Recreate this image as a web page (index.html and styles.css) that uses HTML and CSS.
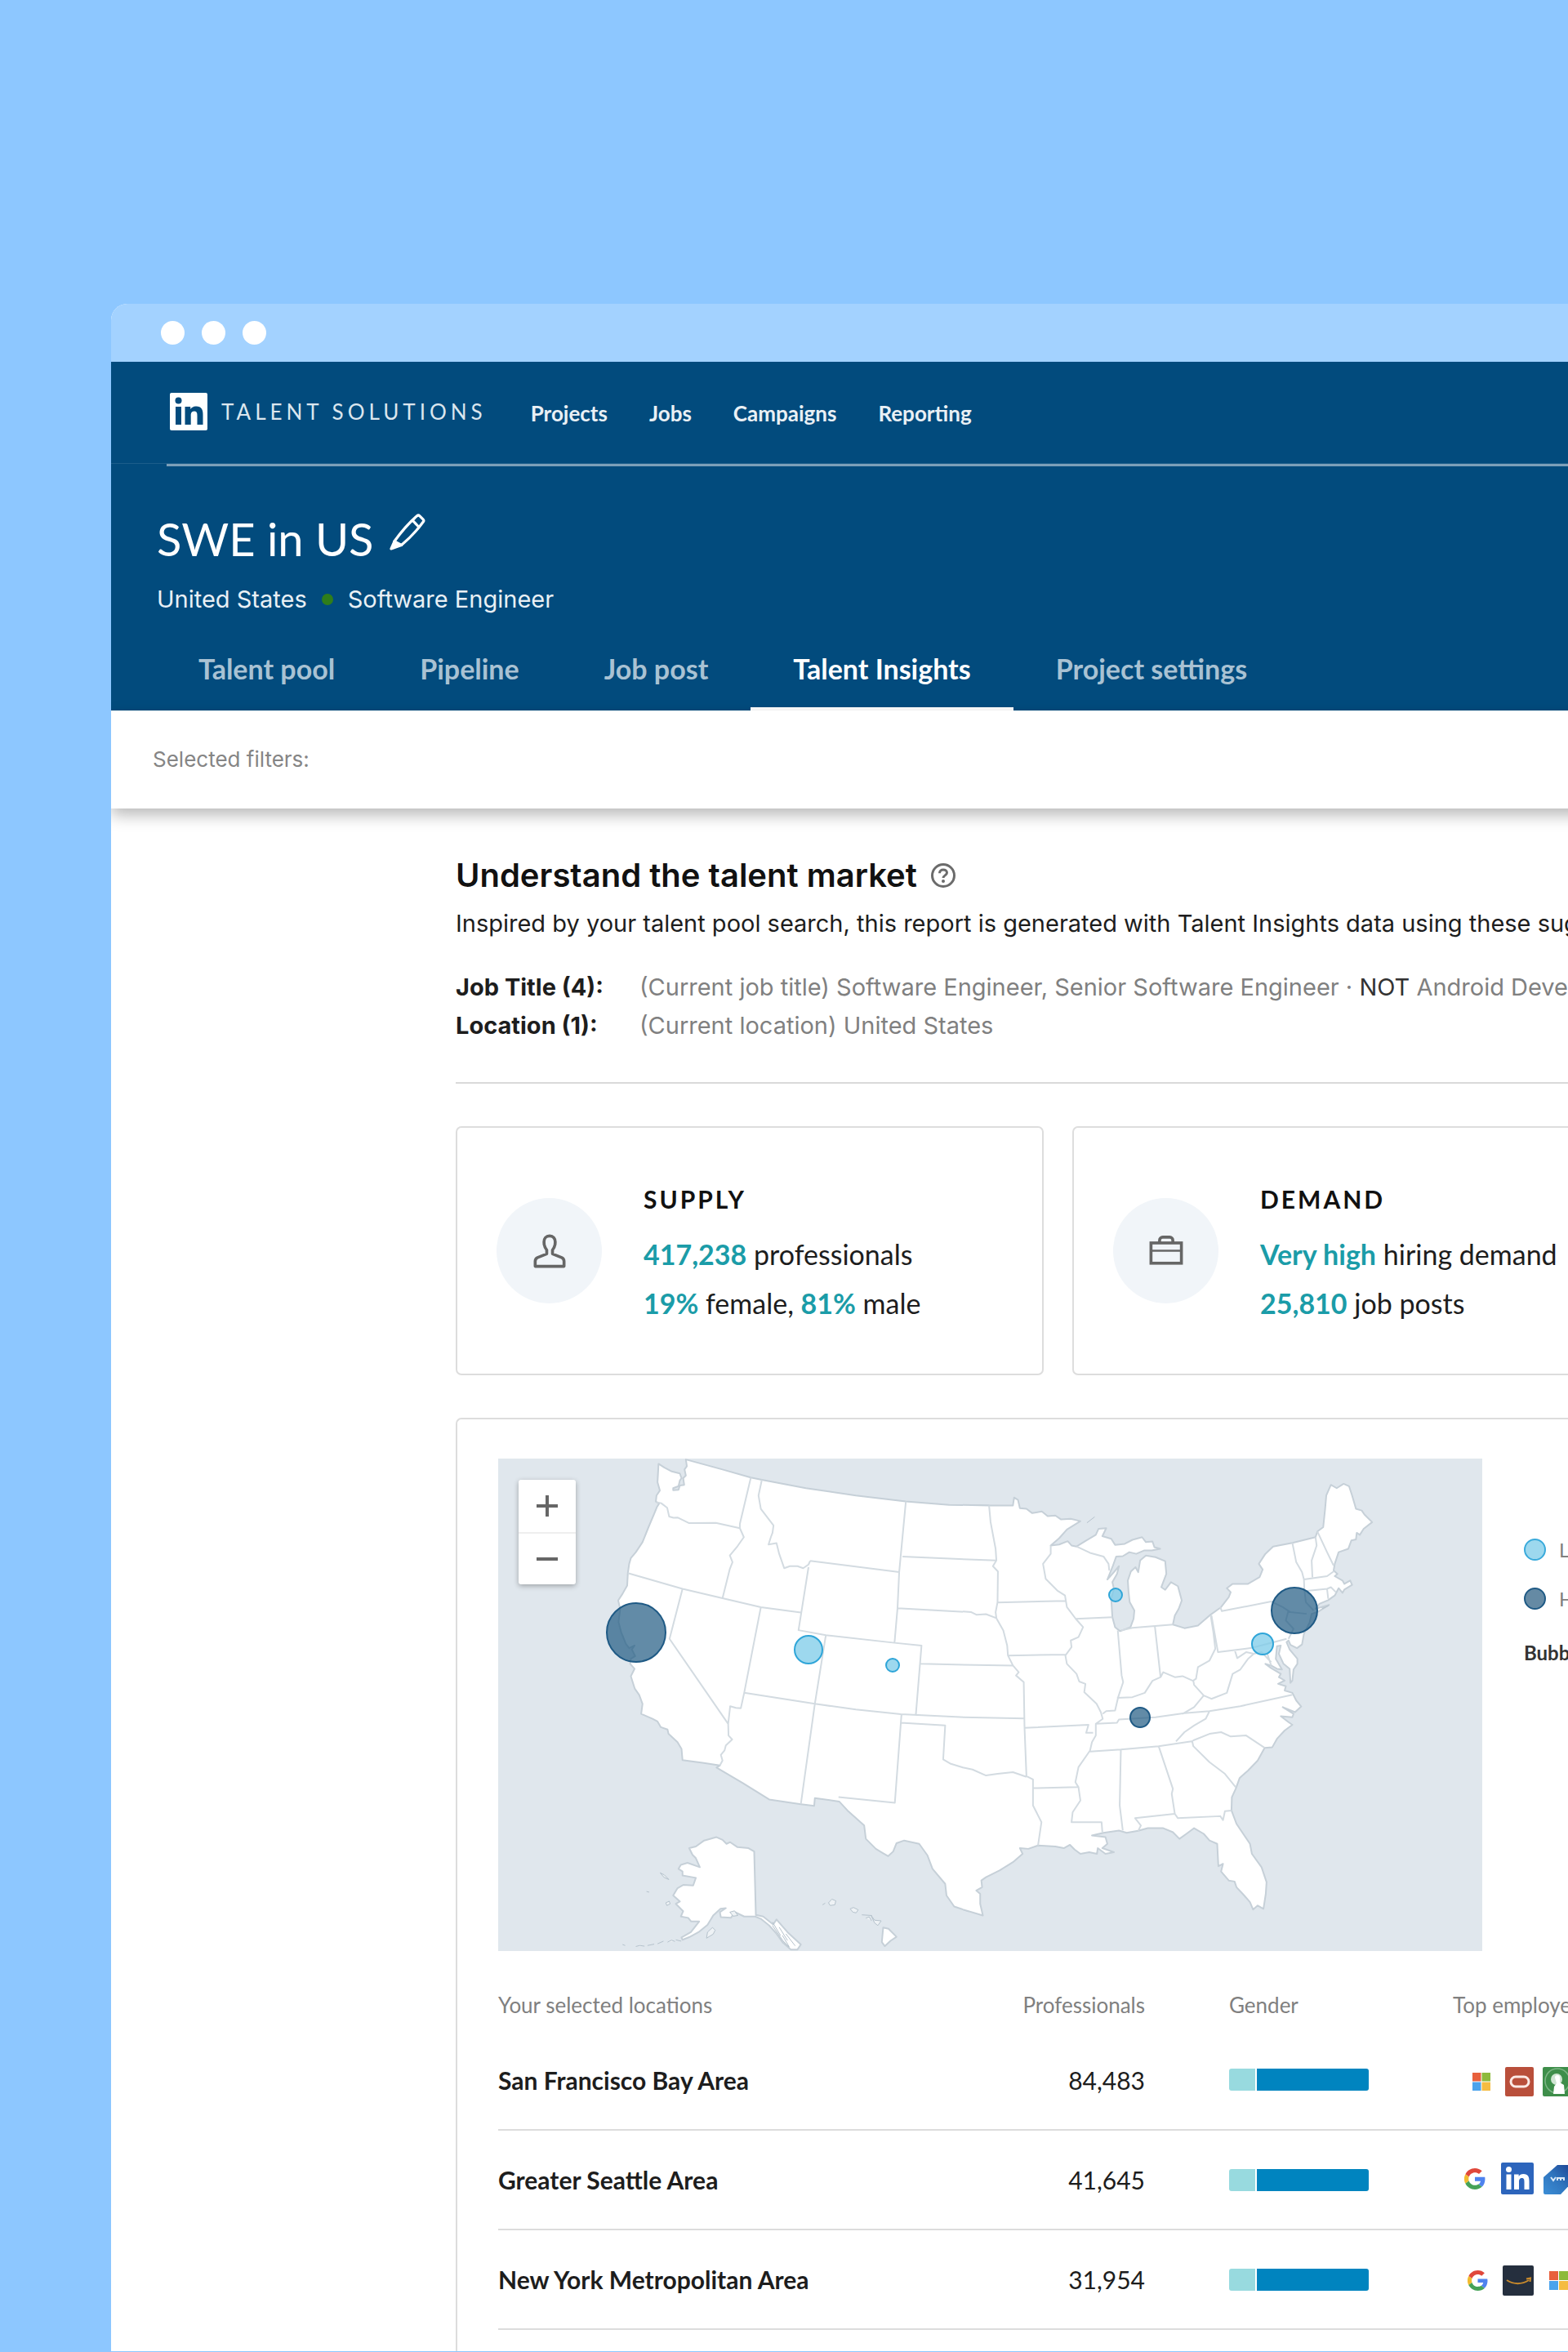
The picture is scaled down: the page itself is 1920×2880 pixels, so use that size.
FILE: index.html
```html
<!DOCTYPE html>
<html lang="en">
<head>
<meta charset="utf-8">
<meta name="viewport" content="width=device-width, initial-scale=1">
<title>SWE in US – Talent Insights</title>
<link rel="stylesheet" href="styles.css">
</head>
<body>
<svg class="sprite" aria-hidden="true">
  <symbol id="google" viewBox="0 0 48 48">
    <path fill="#e0483b" d="M24 9.5c3.5 0 6.700 1.200 9.200 3.600l6.900-6.900C35.900 2.400 30.500 0 24 0 14.600 0 6.500 5.400 2.600 13.200l8 6.200C12.400 13.700 17.700 9.500 24 9.500z"/>
    <path fill="#4f83ee" d="M47 24.500c0-1.600-.2-3.100-.4-4.500H24v9h12.900c-.6 3-2.200 5.500-4.700 7.200l7.700 6C44.400 38 47 31.800 47 24.500z"/>
    <path fill="#f3bb2f" d="M10.500 28.600a14.500 14.500 0 0 1 0-9.200l-8-6.200a24 24 0 0 0 0 21.600l8-6.200z"/>
    <path fill="#45a257" d="M24 48c6.500 0 11.900-2.100 15.900-5.800l-7.700-6c-2.200 1.500-4.900 2.300-8.200 2.300-6.300 0-11.600-4.200-13.500-9.900l-8 6.200C6.500 42.600 14.600 48 24 48z"/>
  </symbol>
  <symbol id="microsoft" viewBox="0 0 22 22">
    <path fill="#e8603c" d="M0 0h10.500v10.500H0z"/><path fill="#8dba3c" d="M11.500 0H22v10.500H11.500z"/>
    <path fill="#4ba3ec" d="M0 11.500h10.500V22H0z"/><path fill="#f5bc42" d="M11.500 11.500H22V22H11.500z"/>
  </symbol>
</svg>

<div class="window">
  <div class="titlebar"><span class="dot"></span><span class="dot"></span><span class="dot"></span></div>

  <header class="header">
    <div class="topbar">
      <a class="brand" href="#">
        <svg class="brand-mark" viewBox="0 0 46 46" role="img" aria-label="LinkedIn">
          <rect width="46" height="46" rx="2" fill="#fff"/>
          <circle cx="10.500" cy="9.500" r="4" fill="#024b7d"/>
          <path fill="#024b7d" d="M7 17h7v22H7zM18.500 17h6.700v3c1-1.800 3.400-3.600 6.800-3.600 7 0 8.500 4.500 8.500 10.500V39h-7V28.200c0-2.600 0-5.800-3.600-5.800s-4.200 2.800-4.200 5.700V39h-7.200z"/>
        </svg>
        <span class="brand-name">TALENT SOLUTIONS</span>
      </a>
      <nav class="topnav" aria-label="Main">
        <a href="#">Projects</a><a href="#">Jobs</a><a href="#">Campaigns</a><a href="#">Reporting</a>
      </nav>
    </div>
    <hr class="header-rule">
    <div class="project">
      <div class="project-title">
        <h1>SWE in US</h1>
        <button class="edit" type="button" aria-label="Edit project name">
          <svg viewBox="0 0 44 46" fill="none" stroke="#fff" stroke-width="3.200" stroke-linejoin="round">
            <path d="M33.500 2.800a2.500 2.500 0 0 1 3.500 0l4 4a2.500 2.500 0 0 1 0 3.500C34 20 26 29 14.500 38.500l-4-.5-4.500-4.200C13 24 23 12 33.500 2.800z"/>
            <path d="M28.500 8.500l7 7.500"/>
            <path d="M6 33.800L2 43l12.500-4.500z" fill="#fff"/>
          </svg>
        </button>
      </div>
      <p class="project-meta"><span>United States</span><span class="sep"></span><span>Software Engineer</span></p>
    </div>
    <nav class="tabs" aria-label="Project">
      <a href="#">Talent pool</a><a href="#">Pipeline</a><a href="#">Job post</a><a class="active" href="#" aria-current="page">Talent Insights</a><a href="#">Project settings</a>
    </nav>
  </header>

  <div class="filters">Selected filters:</div>

  <main class="report">
    <div class="report-title">
      <h2>Understand the talent market</h2>
      <button class="help" type="button" aria-label="Help">
        <svg viewBox="0 0 32 32" fill="none" stroke="#6b6b6b" stroke-width="3">
          <circle cx="16" cy="16" r="13.500"/>
          <path d="M11.500 13.200c0-2.700 2-4.200 4.500-4.200s4.500 1.500 4.500 3.800c0 3-4.500 3.200-4.500 6.200"/>
          <circle cx="16" cy="23" r="2" fill="#6b6b6b" stroke="none"/>
        </svg>
      </button>
    </div>
    <p class="intro">Inspired by your talent pool search, this report is generated with Talent Insights data using these suggestions</p>
    <dl class="criteria">
      <dt>Job Title (4):</dt>
      <dd>(Current job title) Software Engineer, Senior Software Engineer · <span class="not">NOT</span> Android Developer</dd>
      <dt>Location (1):</dt>
      <dd>(Current location) United States</dd>
    </dl>
    <hr class="rule">

    <div class="cards">
      <section class="card">
        <span class="badge">
          <svg viewBox="0 0 44 44" fill="none" stroke="#666" stroke-width="3.800" stroke-linejoin="round">
            <path d="M22 2.500c-4.600 0-7.200 3.200-7.200 7.600 0 5 1.700 8.300 3.500 10.400v5L6.500 30.200C4.300 31.200 3.500 33 3.500 35v6.500h37V35c0-2-.8-3.800-3-4.800l-11.800-4.700v-5c1.800-2.100 3.500-5.400 3.500-10.400 0-4.400-2.600-7.600-7.200-7.600z"/>
          </svg>
        </span>
        <div class="card-text">
          <h3>SUPPLY</h3>
          <p><b>417,238</b> professionals</p>
          <p><b>19%</b> female, <b>81%</b> male</p>
        </div>
      </section>
      <section class="card">
        <span class="badge">
          <svg viewBox="0 0 44 44" fill="none" stroke="#666" stroke-width="3.800">
            <rect x="2.500" y="11.500" width="39" height="26"/>
            <path d="M13.500 11V8a4 4 0 0 1 4-4h9a4 4 0 0 1 4 4v3"/>
            <path d="M2 21.500h40" stroke-width="2.500"/>
          </svg>
        </span>
        <div class="card-text">
          <h3>DEMAND</h3>
          <p><b>Very high</b> hiring demand</p>
          <p><b>25,810</b> job posts</p>
        </div>
      </section>
    </div>

    <section class="panel">
      <div class="map-row">
        <div class="map">
          <svg class="map-art" viewBox="0 0 1205 603" role="img" aria-label="Map of the United States">
            <!-- western half and Alaska, Hawaii -->
            <g class="land" transform="translate(-11 -16) scale(.40816)">
              <path d="M1500 180L1380 178 1250 168 1100 150 950 128 818 103 785 96 700 72 590 42 593 62 586 72 590 90 582 98 585 118 572 120 568 133 552 134 552 128 568 122 572 105 577 98 572 84 548 78 525 66 508 55 507 75 505 110 512 135 502 150 500 168 510 174 503 185 495 205 478 245 460 290 440 320 425 338 420 355 416 383 414 420 400 445 387 465 393 490 388 530 396 560 410 595 420 608 436 600 428 612 438 632 425 640 423 655 436 670 425 692 437 730 450 748 460 775 456 805 490 820 505 828 515 845 535 852 538 865 565 890 577 910 580 944 640 952 692 960 682 966 760 1012 840 1062 935 1076 975 1081 977 1058 1050 1068 1075 1095 1125 1140 1130 1180 1160 1210 1180 1222 1197 1232 1212 1218 1222 1193 1245 1185 1290 1195 1315 1230 1330 1270 1368 1315 1372 1350 1395 1383 1440 1398"/>
              <path class="border" d="M502 170L516 173 534 187 540 213 553 217 565 216 600 233 680 232 752 248M785 96L752 235V248L764 275 745 302 722 330 730 350 722 370 700 458M416 383L580 430 700 458 815 485 935 501M580 430L541 580 717 835M815 485L765 742 755 788 740 787 723 782 717 835 718 870 729 882 710 900 706 915 695 928 700 945 692 960M765 742L977 775 1100 792 1235 806 1425 815M963 346L1230 380M958 365L928 554 1010 569 1216 592 1297 600 1280 808M818 103L808 150 815 190 830 210 853 240 850 262 845 275 838 297 862 293 870 325 885 368 902 362 925 362 942 368 958 357 963 346M1250 168L1230 380 1225 488 1216 592M1010 569L977 775 935 1076M1295 655L1425 658M1240 333L1425 341M1225 488L1425 499M1237 806L1235 832 1217 1072 1048 1055M1235 832L1368 840 1362 942 1385 955 1425 967"/>
              <path d="M682 1175L700 1183 712 1195 723 1190 745 1205 778 1208 795 1218 800 1408 822 1413 852 1437 862 1422 895 1460 935 1497 925 1512 905 1512 880 1490 860 1462 840 1440 815 1420 798 1413 765 1413 738 1400 725 1417 695 1415 692 1400 710 1388 694 1390 672 1410 655 1438 628 1460 600 1475 580 1483 577 1476 605 1460 630 1428 606 1428 597 1417 575 1413 582 1397 560 1375 572 1368 552 1350 565 1328 583 1318 612 1320 620 1297 580 1290 580 1278 568 1270 575 1258 595 1252 632 1265 620 1238 610 1228 600 1208 620 1203 645 1185Z"/>
              <path class="isle" d="M513 1282l12 6 14 14-14-6zM472 1338l8 2M530 1372l10-5 3 8-10 5zM655 1460l15-14 8 8-6 12-20 12zM400 1497l8 3M440 1503l12-3 14 2M475 1500l20-4M505 1495l18-8M535 1490l12-6 10 4M560 1483l16 4M722 1400l14-4 10 14-14 2zM1000 1378l8-5M1018 1372l10-11 12 5-3 12-14 2zM1083 1390l10-4 14 7-6 9-10-2zM1118 1408l30 2M1130 1418l10-4 7 12M1146 1410l10 14 20 2-10 14-10-8zM850 1440l30 45 20 20M870 1445l25 40M850 1430l24 40M880 1470l20 34M890 1465l28 36"/>
              <path d="M1182 1446L1198 1450 1222 1474 1204 1486 1187 1502 1178 1490Z"/>
            </g>
            <!-- eastern half -->
            <g class="land" transform="translate(569 -16) scale(.47192 .40816)">
              <path d="M0 178L68 180 130 180 133 156 143 163 148 188 165 190 180 203 205 198 220 212 240 210 255 222 280 220 305 227 270 252 250 278 228 300 250 297 272 287 282 300 295 303 320 285 345 268 352 250 372 248 362 272 385 280 395 298 420 295 440 283 465 275 475 290 492 288 497 305 512 310 490 315 470 315 450 325 432 320 415 332 398 333 388 365 375 402 392 380 405 362 400 385 388 410 392 430 385 460 388 515 395 545 408 557 435 545 443 520 445 495 433 470 430 440 428 405 436 378 448 365 455 380 460 345 475 330 500 335 525 347 528 385 515 425 525 433 540 410 558 422 568 465 560 490 550 510 545 537 575 548 610 540 640 510 670 485 690 455 695 440 685 428 700 415 740 415 770 395 778 372 768 355 785 325 805 303 855 292 915 275 920 258 935 245 940 190 943 150 955 118 970 128 988 115 1002 122 1010 150 1020 190 1035 195 1042 207 1062 230 1040 250 1030 268 1022 262 1020 282 1008 285 1000 310 975 320 965 355 962 375 972 385 965 392 985 405 990 415 1005 405 1010 418 990 432 985 442 975 428 965 450 948 464 925 475 915 490 950 478 920 500 905 505 900 530 885 565 880 597 867 608 850 598 845 585 840 590 848 612 868 640 868 655 858 672 855 705 850 712 848 670 832 655 820 625 825 600 815 602 812 640 828 672 815 670 800 660 785 655 800 668 825 685 820 695 835 705 818 715 838 722 835 735 855 742 865 765 878 783 862 800 830 785 858 805 855 815 825 812 845 830 855 838 835 855 815 880 803 905 783 907 765 945 740 975 718 998 708 1030 698 1055 697 1095 710 1135 745 1195 750 1225 775 1265 788 1310 786 1345 780 1390 765 1380 753 1392 745 1370 730 1350 710 1325 705 1308 690 1305 670 1278 675 1255 663 1262 660 1195 640 1185 625 1165 600 1148 580 1165 562 1180 545 1160 520 1148 480 1148 455 1156 425 1162 405 1155 365 1162 335 1170 370 1175 375 1195 362 1208 392 1220 370 1225 350 1208 348 1225 328 1220 305 1225 290 1212 278 1198 262 1208 240 1203 195 1200 170 1210 148 1208 155 1225 130 1250 95 1275 60 1295 48 1305 50 1325 35 1335 45 1345 45 1375 52 1410 0 1392"/>
              <path class="border" d="M0 341L87 345M0 498L22 500 36 508 60 506 87 518M0 658L130 660M0 815L160 819M68 180L72 230 85 310 87 345 78 362 91 378 90 470 85 500 87 518 105 555 115 600 117 630 130 660 145 680 138 690 158 710 160 845 165 992 182 1002 182 1080 204 1130 195 1200M90 471L268 466M228 300L228 325 208 355 215 400 245 435 265 450 270 485 293 520 312 545 300 575 280 585 282 605 266 630 270 655 295 685 302 708 318 715 315 740 347 775 358 800 363 820 345 835 345 870 335 890 330 915 300 965 292 1010 300 1025 305 1065 285 1100 282 1130 360 1130 362 1160M293 520L388 515M117 630L268 627M160 847L326 838 320 862 338 862M182 1028L298 1025M0 966L25 972 60 990 90 985 130 980 165 994M402 555L412 690 416 710 403 755 395 795 372 797 363 805M400 757L440 755 472 742 492 706 513 695 520 680 550 695 570 692 597 706 605 700 610 665 640 645 655 610 650 560 643 510M498 540L513 695M410 555L440 547 545 537M345 835L400 832 405 822 500 815 575 803 640 797 720 782 855 748M570 805L600 785 625 750 600 718 598 706M625 750L645 760 685 742 700 685 720 672 740 640 755 625 735 620 712 638 705 612M645 510L662 620 750 607 840 580M668 485L672 497 800 468 830 485 850 500 892 505M295 303L330 322 365 333 378 355 380 375M640 797L630 820 600 840 575 860 553 888M330 918L410 912 508 902 597 887M410 912L407 1080 415 1155M508 902L545 1030 542 1045 550 1105 447 1118 462 1140 455 1156M550 1105L558 1118 668 1112 675 1124 680 1097 697 1095M597 885L640 865 670 860 695 873 735 870 783 907M595 887L598 902 640 950 680 985 708 1025M855 292L865 350 880 380 885 402 886 430 890 470 910 495M915 275L918 300 905 345 907 395M920 258L945 320 962 360M885 402L945 392 962 378M888 437L945 430 955 425 968 440M945 430L948 460M845 495L838 525 858 550 845 580M755 625L775 620 800 650M790 625L800 660"/>
              <path class="isle" d="M322 232l20-18M932 490l18-10"/>
            </g>
            <g class="bubbles">
              <g class="high"><circle cx="169" cy="213" r="36"/><circle cx="975" cy="186" r="28"/><circle cx="786" cy="317" r="12"/></g>
              <g class="low"><circle cx="380" cy="234" r="17"/><circle cx="483" cy="253" r="8"/><circle cx="756" cy="167" r="8"/><circle cx="936" cy="227" r="13"/></g>
            </g>
          </svg>
          <div class="zoom">
            <button type="button" aria-label="Zoom in"><svg viewBox="0 0 26 26"><path d="M13 0v26M0 13h26"/></svg></button>
            <button type="button" aria-label="Zoom out"><svg viewBox="0 0 26 26"><path d="M0 13h26"/></svg></button>
          </div>
        </div>
        <div class="legend">
          <p><i class="swatch swatch-low"></i>Low hiring demand</p>
          <p><i class="swatch swatch-high"></i>High hiring demand</p>
          <p class="legend-note">Bubble size</p>
        </div>
      </div>

      <table class="locations">
        <colgroup><col class="c-place"><col class="c-count"><col class="c-gender"><col></colgroup>
        <thead>
          <tr><th>Your selected locations</th><th class="num">Professionals</th><th class="gender">Gender</th><th>Top employers</th></tr>
        </thead>
        <tbody>
          <tr>
            <td class="place">San Francisco Bay Area</td><td class="num">84,483</td>
            <td class="gender"><div class="bar"><span style="width:19%"></span><span></span></div></td>
            <td><div class="logos">
              <svg viewBox="0 0 48 40"><use href="#microsoft" x="16" y="11" width="22" height="22"/></svg>
              <svg viewBox="0 0 48 40"><rect x="8" y="4" width="35" height="36" rx="2" fill="#b94f3b"/><rect x="15" y="16" width="22" height="12" rx="6" fill="none" stroke="#fbe9e5" stroke-width="3"/></svg>
              <svg viewBox="0 0 48 40"><rect x="6" y="4" width="36" height="36" rx="2" fill="#3e8e4a"/><circle cx="24" cy="21" r="15" fill="none" stroke="#7db585" stroke-width="1.500"/><circle cx="23" cy="19" r="7" fill="#cfe5d2"/><path fill="#fff" d="M21 17a3 3 0 0 1 6 0v6l5 3 1 11H19l1-9 3-4z"/></svg>
            </div></td>
          </tr>
          <tr>
            <td class="place">Greater Seattle Area</td><td class="num">41,645</td>
            <td class="gender"><div class="bar"><span style="width:19%"></span><span></span></div></td>
            <td><div class="logos">
              <svg viewBox="0 0 48 40"><use href="#google" x="6" y="6" width="26" height="26"/></svg>
              <svg viewBox="0 0 48 40"><rect x="3" y="-1" width="40" height="39" rx="2" fill="#2d65bc"/><circle cx="12.500" cy="7.500" r="3.500" fill="#fff"/><path fill="#fff" d="M9.500 13.500h6V32h-6zM19 13.500h5.700V16c1-1.700 3-3 5.700-3 5.900 0 7.100 3.800 7.100 8.900V32h-6v-9.100c0-2.200 0-4.900-3-4.900s-3.500 2.400-3.500 4.800V32h-6z"/></svg>
              <svg viewBox="0 0 48 40"><defs><linearGradient id="vm" x1="0" y1="1" x2="1" y2="0"><stop offset="0" stop-color="#3c8ed6"/><stop offset=".5" stop-color="#2f74bd"/><stop offset="1" stop-color="#1c3f8f"/></linearGradient></defs><path fill="url(#vm)" d="M7 17L24 2h19v20L28 38H9a2 2 0 0 1-2-2z"/><path d="M16 17l3 4 3-4M24 21v-3h8v3M28 18v3" fill="none" stroke="#dbe8f6" stroke-width="2"/></svg>
            </div></td>
          </tr>
          <tr>
            <td class="place">New York Metropolitan Area</td><td class="num">31,954</td>
            <td class="gender"><div class="bar"><span style="width:19%"></span><span></span></div></td>
            <td><div class="logos">
              <svg viewBox="0 0 48 40"><use href="#google" x="10" y="9" width="25" height="25"/></svg>
              <svg viewBox="0 0 48 40"><rect x="5" y="3" width="38" height="37" rx="2" fill="#252f3e"/><path d="M10 21c8 5.500 19 5.500 27 0M34 19.500l5-1-.5 4.500" fill="none" stroke="#c98a2c" stroke-width="2"/></svg>
              <svg viewBox="0 0 48 40"><use href="#microsoft" x="14" y="10" width="23" height="23"/></svg>
            </div></td>
          </tr>
        </tbody>
      </table>
    </section>
  </main>
</div>
</body>
</html>
```
FILE: styles.css
```css
* { box-sizing: border-box; }

body {
  margin: 0;
  padding: 372px 0 1px 136px;
  background: #8dc7ff;
  color: #1d1d1d;
  font-family: Lato, "Liberation Sans", sans-serif;
  overflow-x: hidden;
}

h1, h2, h3, p, dl, dd, hr { margin: 0; }
hr { border: 0; }
a { color: inherit; text-decoration: none; }
button { padding: 0; border: 0; background: none; cursor: pointer; }
svg { display: block; }

.sprite { position: absolute; width: 0; height: 0; }

.window {
  overflow: hidden;
  border-top-left-radius: 20px;
  background: #fff;
}

.titlebar {
  display: flex;
  align-items: center;
  gap: 21px;
  height: 71px;
  padding-left: 61px;
  background: #a3d2ff;
}
.dot { width: 29px; height: 29px; border-radius: 50%; background: #fff; }

/* Header */
.header { background: #024b7d; color: #fff; }
.topbar {
  display: flex;
  align-items: center;
  height: 125px;
  padding: 0 0 2px 72px;
  border-bottom: 1px solid #1c5d8a;
}
.brand { display: flex; align-items: center; gap: 17px; }
.brand-mark { width: 46px; height: 46px; }
.brand-name { color: #dbe6ee; font-size: 26px; letter-spacing: 5px; white-space: nowrap; }
.topnav { display: flex; gap: 51px; margin-left: 54px; padding-top: 3px; color: #e9f0f5; font-size: 26px; font-weight: 700; }
.header-rule { height: 3px; margin-left: 68px; background: #7c9fb9; }

.project { padding: 55px 0 0 56px; }
.project-title { display: flex; align-items: flex-start; gap: 20px; }
.project-title h1 { font-size: 56px; font-weight: 400; line-height: 68px; }
.edit svg { width: 44px; height: 46px; margin-top: 3px; }
.project-meta {
  display: flex;
  align-items: center;
  gap: 18px;
  margin-top: 20px;
  color: #e9f0f5;
  font: 29px/40px Inter, sans-serif;
}
.sep { width: 14px; height: 14px; border-radius: 50%; background: #2f7d1b; }

.tabs { display: flex; padding: 43px 0 0 55px; }
.tabs a {
  padding: 0 52px 25px;
  border-bottom: 4px solid transparent;
  color: #a9c2d3;
  font-size: 34px;
  font-weight: 700;
  line-height: 44px;
}
.tabs .active { border-color: #fff; color: #fff; }

/* Runs past the window's right edge so its shadow does not fade out there */
.filters {
  position: relative;
  margin-right: -40px;
  padding: 40px 51px;
  background: #fff;
  box-shadow: 0 8px 18px rgba(0, 0, 0, .28);
  color: #858585;
  font: 26px/40px Inter, sans-serif;
}

/* Report */
.report { padding: 56px 0 0 422px; }
.report-title { display: flex; align-items: center; gap: 16px; }
.report-title h2 { color: #111; font: 600 40px/52px Inter, sans-serif; }
.help svg { width: 32px; height: 32px; }
.intro { margin-top: 10px; font: 29px/46px Inter, sans-serif; white-space: nowrap; }
.criteria {
  display: grid;
  grid-template-columns: 225px 1fr;
  margin-top: 31px;
  font: 29px/47px Inter, sans-serif;
  white-space: nowrap;
}
.criteria dt { font-weight: 700; }
.criteria dd { color: #808080; }
.criteria .not { color: #333; }
.rule { height: 2px; margin-top: 46px; background: #d9d9d9; }

.cards { display: flex; gap: 35px; margin-top: 52px; }
.card {
  display: flex;
  flex: 0 0 720px;
  align-items: center;
  gap: 51px;
  height: 305px;
  padding-left: 48px;
  border: 2px solid #ddd;
  border-radius: 7px;
}
.badge {
  display: grid;
  place-items: center;
  width: 129px;
  height: 129px;
  border-radius: 50%;
  background: #f1f5f9;
}
.badge svg { width: 42px; height: 42px; }
.card-text { font-size: 34px; line-height: 60px; white-space: nowrap; }
.card-text h3 { margin-bottom: 8px; color: #111; font-size: 30px; letter-spacing: 3px; }
.card-text b { color: #1b9ca8; }

.panel {
  margin-top: 52px;
  padding: 48px 0 26px 50px;
  border: 2px solid #ddd;
  border-width: 2px 0 0 2px;
  border-top-left-radius: 7px;
}
.map-row { display: flex; gap: 51px; }
.map { position: relative; flex: 0 0 1205px; background: #e0e7ed; }
.land { fill: #fff; stroke: #c6d0d8; stroke-width: 2; stroke-linejoin: round; }
.land path { vector-effect: non-scaling-stroke; }
.land .border { fill: none; stroke-width: 2; stroke: #d3dbe1; }
.land .isle { fill: #eef2f5; stroke: #b5c2cc; stroke-width: 1; }
.bubbles { stroke-width: 2; }
.high { fill: #1f5a82; fill-opacity: .7; stroke: #1f5a85; }
.low { fill: #7ccbe8; fill-opacity: .75; stroke: #2fa5d8; }

.zoom {
  position: absolute;
  top: 26px;
  left: 25px;
  display: grid;
  width: 70px;
  background: #fff;
  border-radius: 3px;
  box-shadow: 0 2px 6px rgba(0, 0, 0, .3);
}
.zoom button { display: grid; place-items: center; height: 64px; }
.zoom button + button { border-top: 2px solid #eee; }
.zoom svg { width: 26px; height: 26px; stroke: #666; stroke-width: 4; }

.legend { padding-top: 87px; color: #808080; font-size: 24px; white-space: nowrap; }
.legend p { display: flex; align-items: center; gap: 16px; height: 48px; margin-bottom: 12px; }
.swatch { width: 27px; height: 27px; border: 2px solid #3aaadb; border-radius: 50%; background: #9dd8ee; }
.swatch-high { border-color: #1f5a85; background: #658aa4; }
.legend .legend-note { margin-top: 18px; color: #333; font-weight: 700; }

/* Locations table */
.locations { width: 100%; border-collapse: collapse; table-layout: fixed; font-size: 30px; white-space: nowrap; }
.c-place { width: 500px; }
.c-count { width: 292px; }
.c-gender { width: 377px; }
.locations th {
  height: 97px;
  padding: 35px 0 0;
  color: #808080;
  font-size: 26px;
  font-weight: 400;
  text-align: left;
}
.locations td { height: 122px; padding: 0; border-bottom: 2px solid #dcdcdc; }
.locations .num { text-align: right; }
.locations .gender { padding-left: 103px; }
.place { font-weight: 700; }
.bar { display: flex; gap: 2px; width: 171px; height: 27px; border-radius: 3px; overflow: hidden; }
.bar span:first-child { background: #98dadf; }
.bar span:last-child { flex: 1; background: #0084bf; }
.logos { display: flex; padding-left: 8px; }
.logos svg { flex: 0 0 48px; height: 40px; overflow: visible; }
```
